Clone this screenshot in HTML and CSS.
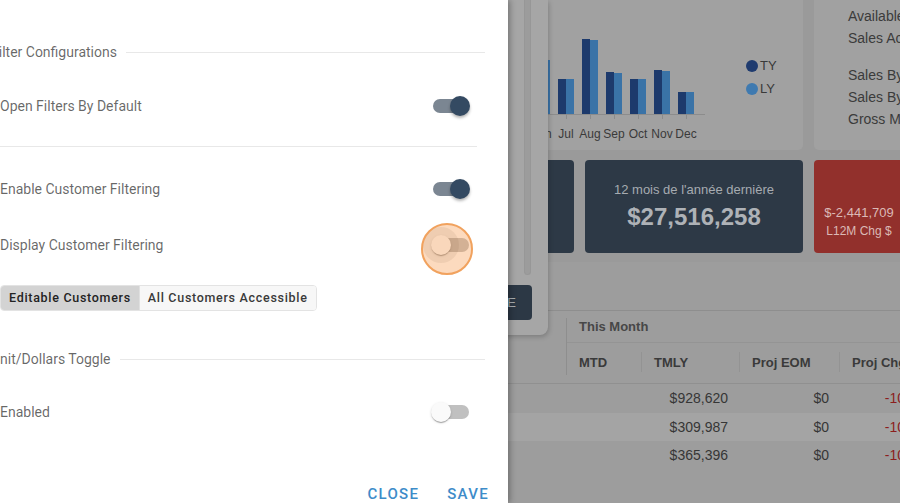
FILE: index.html
```html
<!DOCTYPE html>
<html lang="fr">
<head>
<meta charset="utf-8">
<title>Filter Configurations</title>
<link rel="stylesheet" href="styles.css">
</head>
<body>
<main class="dashboard">
  <div class="dash-grid">
    <section class="card chart-card">
      <svg class="chart" width="447" height="170" viewBox="0 0 447 170">
        <g class="bars-ty" fill="#1d3a6c">
          <rect x="58" y="110" width="8" height="24"/>
          <rect x="82" y="96" width="8" height="38"/>
          <rect x="106" y="88" width="8" height="46"/>
          <rect x="130" y="92" width="8" height="42"/>
          <rect x="154" y="84" width="8" height="50"/>
          <rect x="178" y="82" width="8" height="52"/>
          <rect x="202" y="99" width="8" height="35"/>
          <rect x="226" y="59" width="8" height="75"/>
          <rect x="250" y="92" width="8" height="42"/>
          <rect x="274" y="99" width="8" height="35"/>
          <rect x="298" y="90" width="8" height="44"/>
          <rect x="322" y="112" width="8" height="22"/>
        </g>
        <g class="bars-ly" fill="#3a73a7">
          <rect x="66" y="108" width="8" height="26"/>
          <rect x="90" y="98" width="8" height="36"/>
          <rect x="114" y="86" width="8" height="48"/>
          <rect x="138" y="94" width="8" height="40"/>
          <rect x="162" y="86" width="8" height="48"/>
          <rect x="186" y="80" width="8" height="54"/>
          <rect x="210" y="99" width="8" height="35"/>
          <rect x="234" y="60" width="8" height="74"/>
          <rect x="258" y="93" width="8" height="41"/>
          <rect x="282" y="99" width="8" height="35"/>
          <rect x="306" y="91" width="8" height="43"/>
          <rect x="330" y="112" width="8" height="22"/>
        </g>
        <line x1="40" y1="134.5" x2="349" y2="134.5" stroke="#8c8c8c" stroke-width="1"/>
        <g stroke="#8c8c8c" stroke-width="1">
          <line x1="66.5" y1="135" x2="66.5" y2="139"/>
          <line x1="90.5" y1="135" x2="90.5" y2="139"/>
          <line x1="114.5" y1="135" x2="114.5" y2="139"/>
          <line x1="138.5" y1="135" x2="138.5" y2="139"/>
          <line x1="162.5" y1="135" x2="162.5" y2="139"/>
          <line x1="186.5" y1="135" x2="186.5" y2="139"/>
          <line x1="210.5" y1="135" x2="210.5" y2="139"/>
          <line x1="234.5" y1="135" x2="234.5" y2="139"/>
          <line x1="258.5" y1="135" x2="258.5" y2="139"/>
          <line x1="282.5" y1="135" x2="282.5" y2="139"/>
          <line x1="306.5" y1="135" x2="306.5" y2="139"/>
          <line x1="330.5" y1="135" x2="330.5" y2="139"/>
        </g>
        <g class="axis-labels" text-anchor="middle">
          <text x="66" y="158">Jan</text>
          <text x="90" y="158">Feb</text>
          <text x="114" y="158">Mar</text>
          <text x="138" y="158">Apr</text>
          <text x="162" y="158">May</text>
          <text x="186" y="158">Jun</text>
          <text x="210" y="158">Jul</text>
          <text x="234" y="158">Aug</text>
          <text x="258" y="158">Sep</text>
          <text x="282" y="158">Oct</text>
          <text x="306" y="158">Nov</text>
          <text x="330" y="158">Dec</text>
        </g>
        <circle cx="396" cy="86" r="6" fill="#1f3b6f"/>
        <circle cx="396" cy="109" r="6" fill="#3f7ab0"/>
        <text class="legend" x="404" y="90">TY</text>
        <text class="legend" x="404" y="113">LY</text>
      </svg>
    </section>
    <section class="card info-card">
      <p class="info-line">Sales Today</p>
      <p class="info-line">Available Inventory</p>
      <p class="info-line">Sales Activity</p>
      <p class="info-line info-gap">Sales By Customer</p>
      <p class="info-line">Sales By Item</p>
      <p class="info-line">Gross Margin</p>
    </section>
    <div class="stat stat-dark">
      <p class="stat-label">12 mois en cours</p>
      <p class="stat-value">$25,074,549</p>
    </div>
    <div class="stat stat-dark">
      <p class="stat-label">12 mois de l'année dernière</p>
      <p class="stat-value">$27,516,258</p>
    </div>
    <div class="stat stat-red">
      <div class="stat-mini">
        <p class="mini-value">$-2,441,709</p>
        <p class="mini-label">L12M Chg $</p>
      </div>
    </div>
  </div>

  <section class="card table-card">
    <div class="table-toolbar"></div>
    <div class="gt">
      <div class="gt-head">
        <div class="gt-lead"></div>
        <div class="gt-group">
          <div class="gt-group-title">This Month</div>
          <div class="gt-cols">
            <div class="gt-col w-mtd">MTD</div>
            <div class="gt-col w-tmly">TMLY</div>
            <div class="gt-col w-eom">Proj EOM</div>
            <div class="gt-col w-chg">Proj Chg</div>
          </div>
        </div>
      </div>
      <div class="gt-row">
        <div class="c-lead">Northwind Traders</div>
        <div class="c-num w-mtd"></div>
        <div class="c-num w-tmly">$928,620</div>
        <div class="c-num w-eom">$0</div>
        <div class="c-num w-chg neg">-100.0%</div>
      </div>
      <div class="gt-row alt">
        <div class="c-lead">Contoso Ltd</div>
        <div class="c-num w-mtd"></div>
        <div class="c-num w-tmly">$309,987</div>
        <div class="c-num w-eom">$0</div>
        <div class="c-num w-chg neg">-100.0%</div>
      </div>
      <div class="gt-row">
        <div class="c-lead">Fabrikam Inc</div>
        <div class="c-num w-mtd"></div>
        <div class="c-num w-tmly">$365,396</div>
        <div class="c-num w-eom">$0</div>
        <div class="c-num w-chg neg">-100.0%</div>
      </div>
    </div>
  </section>
</main>

<div class="filter-panel">
  <div class="scrolltrack"></div>
  <button class="panel-btn" type="button">APPLIQUE</button>
</div>

<aside class="drawer">
  <div class="section-title"><span>Filter Configurations</span></div>
  <div class="row row-1">
    <span class="label">Open Filters By Default</span>
    <span class="switch on"><span class="track"></span><span class="thumb"></span></span>
  </div>
  <div class="divider"></div>
  <div class="row row-2">
    <span class="label">Enable Customer Filtering</span>
    <span class="switch on"><span class="track"></span><span class="thumb"></span></span>
  </div>
  <div class="row row-3">
    <span class="label">Display Customer Filtering</span>
    <span class="switch"><span class="track"></span><span class="ripple"></span><span class="thumb"></span><span class="spot"></span></span>
  </div>
  <div class="seg">
    <span class="seg-btn active">Editable Customers</span>
    <span class="seg-btn">All Customers Accessible</span>
  </div>
  <div class="section-title title-2"><span>Unit/Dollars Toggle</span></div>
  <div class="row row-4">
    <span class="label">Enabled</span>
    <span class="switch"><span class="track"></span><span class="thumb"></span></span>
  </div>
  <div class="actions">
    <span class="action">Close</span>
    <span class="action">Save</span>
  </div>
</aside>
</body>
</html>
```

FILE: styles.css
```css
* { box-sizing: border-box; margin: 0; padding: 0; }

html, body {
  width: 900px;
  height: 503px;
  overflow: hidden;
}

body {
  position: relative;
  background: #9a9a9a;
  font-family: "Liberation Sans", Arial, sans-serif;
  color: #333;
}

/* ---------- dimmed dashboard ---------- */
.dashboard {
  margin: -20px 0 0 356px;
  width: 720px;
}

.dash-grid {
  display: grid;
  grid-template-columns: repeat(3, 218px);
  grid-template-rows: 170px 93px;
  column-gap: 11px;
  row-gap: 10px;
}

.card {
  background: #a1a1a1;
  border-radius: 5px;
}

.chart-card { grid-column: 1 / 3; overflow: hidden; }
.chart { display: block; }
.axis-labels text { font-family: "Liberation Sans", Arial, sans-serif; font-size: 12px; fill: #3a3a3a; }
.legend { font-family: "Liberation Sans", Arial, sans-serif; font-size: 13px; fill: #3a3a3a; }

.info-card {
  padding: 3px 0 0 34px;
  white-space: nowrap;
  overflow: hidden;
}
.info-line {
  font-size: 14px;
  line-height: 22px;
  color: #3b3b3b;
}
.info-gap { margin-top: 15px; }

.stat {
  border-radius: 4px;
  text-align: center;
  overflow: hidden;
}
.stat-dark {
  background: #2d3946;
  padding-top: 22px;
}
.stat-label {
  font-size: 13px;
  line-height: 16px;
  color: #a6abb1;
}
.stat-value {
  margin-top: 5px;
  font-size: 24px;
  line-height: 28px;
  font-weight: bold;
  color: #aeb2b7;
}
.stat-red {
  background: #92302c;
  padding: 44px 0 0 8px;
}
.stat-mini {
  width: 74px;
  text-align: center;
  color: #dbb9b6;
  white-space: nowrap;
}
.mini-value { font-size: 13px; line-height: 18px; }
.mini-label { font-size: 12px; line-height: 19px; }

.table-card {
  margin-top: 9px;
  height: 260px;
  background: #9d9d9d;
}
.table-toolbar { height: 48px; }

.gt-head {
  display: flex;
  border-top: 1px solid #8e8e8e;
  border-bottom: 1px solid #909090;
}
.gt-lead, .c-lead { width: 210px; flex: none; }
.c-lead { color: transparent; padding-left: 12px; }
.gt-group {
  position: relative;
  flex: 1;
}
.gt-group::before {
  content: "";
  position: absolute;
  left: 0;
  top: 7px;
  width: 1px;
  height: 57px;
  background: #8e8e8e;
}
.gt-group-title {
  height: 32px;
  line-height: 32px;
  padding-left: 13px;
  font-size: 13px;
  font-weight: bold;
  color: #474747;
  border-bottom: 1px solid #949494;
}
.gt-cols { display: flex; height: 40px; }
.gt-col {
  position: relative;
  padding-left: 13px;
  line-height: 40px;
  font-size: 13px;
  font-weight: bold;
  color: #3a3a3a;
  white-space: nowrap;
}
.gt-col + .gt-col::before {
  content: "";
  position: absolute;
  left: 0;
  top: 9px;
  width: 1px;
  height: 20px;
  background: #939393;
}
.w-mtd { width: 75px; flex: none; }
.w-tmly { width: 98px; flex: none; }
.w-eom { width: 100px; flex: none; }
.w-chg { width: 100px; flex: none; }

.gt-row {
  display: flex;
  align-items: center;
  height: 28.5px;
  font-size: 14px;
  color: #363636;
}
.gt-row.alt { background: #a4a4a4; }
.c-num {
  text-align: right;
  padding-right: 11px;
  white-space: nowrap;
}
.c-num.w-eom { padding-right: 10px; }
.c-num.w-chg { padding-right: 2px; }
.neg { color: #8c1e1e; }

/* ---------- floating filter panel ---------- */
.filter-panel {
  position: absolute;
  left: 430px;
  top: 0;
  width: 118px;
  height: 335px;
  background: #a6a6a6;
  border-radius: 0 0 8px 0;
  box-shadow: 1px 2px 5px rgba(0, 0, 0, 0.2);
  display: flex;
  flex-direction: column;
  align-items: flex-end;
  padding-right: 17px;
}
.scrolltrack {
  width: 7px;
  height: 275px;
  background: #9c9c9c;
  border: 1px solid #979797;
  border-top: none;
  border-radius: 0 0 4px 4px;
}
.panel-btn {
  margin-top: 10px;
  margin-right: -1px;
  width: 90px;
  height: 35px;
  border: none;
  border-radius: 4px;
  background: #2c3845;
  color: #a9aeb3;
  font-family: "Liberation Sans", Arial, sans-serif;
  font-size: 13px;
  letter-spacing: 1px;
  text-align: right;
  padding-right: 15px;
}

/* ---------- settings drawer ---------- */
.drawer {
  position: absolute;
  left: 0;
  top: 0;
  width: 508px;
  height: 503px;
  background: #fff;
  box-shadow: 2px 0 6px rgba(0, 0, 0, 0.3);
  font-family: Roboto, "Noto Sans", sans-serif;
  font-size: 14px;
  color: rgba(0, 0, 0, 0.6);
  padding-top: 42px;
  display: flex;
  flex-direction: column;
}
.drawer > * { flex: none; }

.section-title {
  display: flex;
  align-items: center;
  gap: 9px;
  margin-left: -9px;
  margin-right: 23px;
  height: 20px;
  line-height: 20px;
  white-space: nowrap;
}
.section-title::after {
  content: "";
  flex: 1;
  height: 1px;
  background: #e8e8e8;
}
.title-2 { margin-top: 38px; }

.row {
  display: flex;
  align-items: center;
  justify-content: space-between;
  height: 40px;
  padding-right: 39px;
}
.row-1 { margin-top: 24px; }
.row-2 { margin-top: 22px; }
.row-3 { margin-top: 16px; }
.row-4 { margin-top: 23px; }

.divider {
  margin-top: 20px;
  margin-right: 31px;
  height: 1px;
  background: #e8e8e8;
}

.switch {
  position: relative;
  width: 36px;
  height: 20px;
  flex: none;
}
.switch .track {
  position: absolute;
  left: 0;
  top: 3px;
  width: 36px;
  height: 14px;
  border-radius: 7px;
  background: #c0c0c0;
}
.switch .thumb {
  position: absolute;
  left: -2px;
  top: 0;
  width: 20px;
  height: 20px;
  border-radius: 50%;
  background: #fafafa;
  box-shadow: 0 2px 1px -1px rgba(0,0,0,.2), 0 1px 1px 0 rgba(0,0,0,.14), 0 1px 3px 0 rgba(0,0,0,.12);
}
.switch.on .track { background: #7b8692; }
.switch.on .thumb {
  left: 17px;
  background: #344a62;
  box-shadow: 0 2px 3px rgba(0,0,0,.3);
}
.switch .ripple {
  position: absolute;
  left: -10px;
  top: -8px;
  width: 36px;
  height: 36px;
  border-radius: 50%;
  background: rgba(0, 0, 0, 0.08);
}
.switch .spot {
  position: absolute;
  left: -12px;
  top: -12px;
  width: 52px;
  height: 52px;
  border-radius: 50%;
  background: rgba(247, 150, 70, 0.35);
  border: 2px solid #f1a25e;
}

.seg {
  margin-top: 20px;
  align-self: flex-start;
  display: flex;
  height: 26px;
  border: 1px solid #e3e3e3;
  border-radius: 4px;
  overflow: hidden;
}
.seg-btn {
  padding: 0 8px;
  line-height: 24px;
  font-size: 12.5px;
  font-weight: 500;
  letter-spacing: 0.7px;
  color: #3a3a3a;
  background: #f7f7f7;
  white-space: nowrap;
}
.seg-btn.active {
  background: #d3d3d3;
  color: #232323;
  border-right: 1px solid #e0e0e0;
}

.actions {
  margin-top: 44px;
  height: 36px;
  display: flex;
  align-items: center;
  justify-content: flex-end;
  gap: 28px;
  padding-right: 19px;
}
.action {
  font-size: 15px;
  font-weight: 500;
  letter-spacing: 1.3px;
  text-transform: uppercase;
  color: #3e8cc9;
}
```
